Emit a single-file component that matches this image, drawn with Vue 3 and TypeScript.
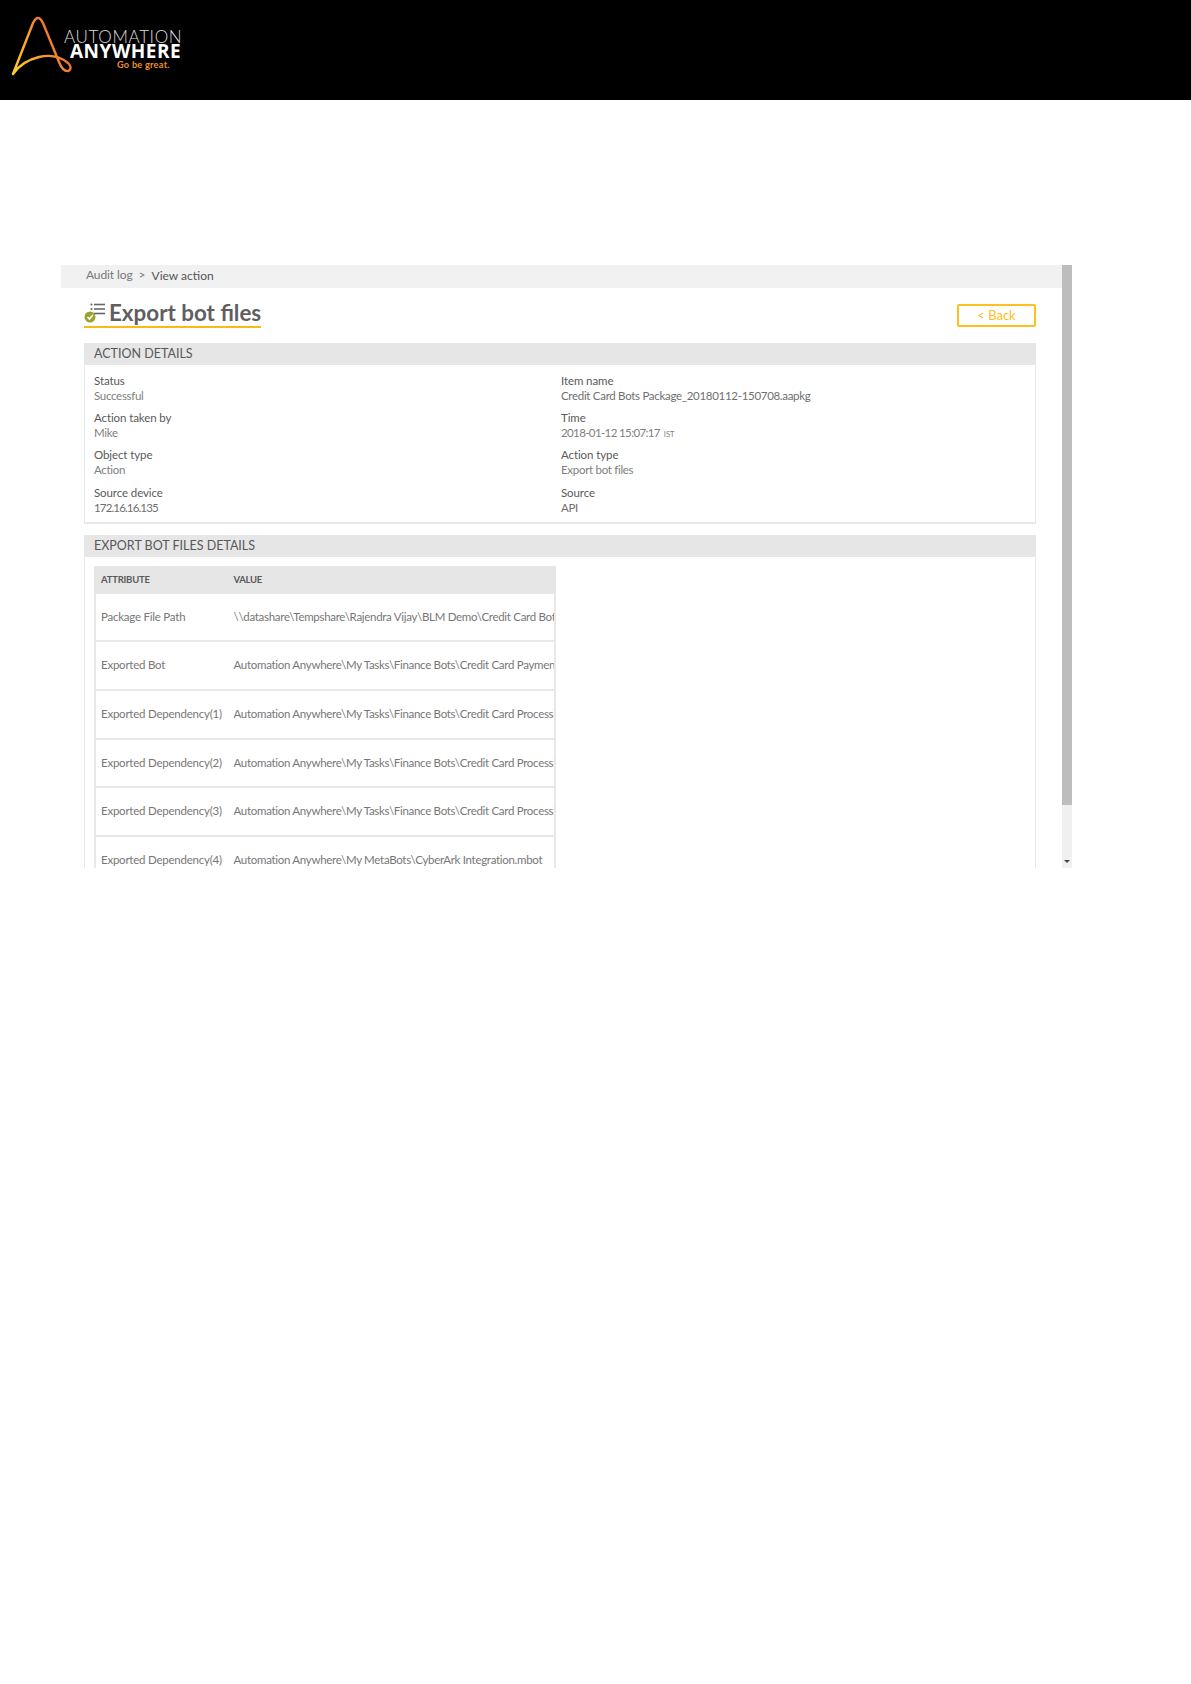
<script setup lang="ts">
interface Field { label: string; value: string; zone?: string; kind?: string }
const fields: Field[] = [
  { label: 'Status', value: 'Successful' },
  { label: 'Item name', value: 'Credit Card Bots Package_20180112-150708.aapkg', kind: 'dark' },
  { label: 'Action taken by', value: 'Mike' },
  { label: 'Time', value: '2018-01-12 15:07:17', zone: 'IST', kind: 'time' },
  { label: 'Object type', value: 'Action' },
  { label: 'Action type', value: 'Export bot files' },
  { label: 'Source device', value: '172.16.16.135', kind: 'dark ip' },
  { label: 'Source', value: 'API', kind: 'dark' },
]
const rows: [string, string][] = [
  ['Package File Path', '\\\\datashare\\Tempshare\\Rajendra Vijay\\BLM Demo\\Credit Card Bots Package_20180112-150708.aapkg'],
  ['Exported Bot', 'Automation Anywhere\\My Tasks\\Finance Bots\\Credit Card Payment.atmx'],
  ['Exported Dependency(1)', 'Automation Anywhere\\My Tasks\\Finance Bots\\Credit Card Processing.atmx'],
  ['Exported Dependency(2)', 'Automation Anywhere\\My Tasks\\Finance Bots\\Credit Card Processing.atmx'],
  ['Exported Dependency(3)', 'Automation Anywhere\\My Tasks\\Finance Bots\\Credit Card Processing.atmx'],
  ['Exported Dependency(4)', 'Automation Anywhere\\My MetaBots\\CyberArk Integration.mbot'],
]
</script>

<template>
  <div class="page">
    <header class="top">
      <div class="logo">
        <svg class="mark" width="80" height="90" viewBox="0 0 80 90" fill="none">
          <defs>
            <linearGradient id="aa" x1="12" y1="74" x2="70" y2="40" gradientUnits="userSpaceOnUse">
              <stop offset="0" stop-color="#ffd22e" />
              <stop offset="0.5" stop-color="#f9a02c" />
              <stop offset="1" stop-color="#ec5a2c" />
            </linearGradient>
          </defs>
          <path d="M13 74 L33 23 Q38 13 43 23 L59 62 Q63 72 68.500 71 Q73 68 68 63 Q56 53 39 57 Q22 61 13 74" stroke="url(#aa)" stroke-width="2.400" stroke-linejoin="round" stroke-linecap="round" />
        </svg>
        <div class="brand">
          <div class="b1">AUTOMATION</div>
          <div class="b2">ANYWHERE</div>
          <div class="b3">Go be great.</div>
        </div>
      </div>
    </header>

    <section class="frame">
      <div class="viewport">
        <nav class="crumbs"><span class="c1">Audit log</span><span class="sep">&gt;</span><span class="c2">View action</span></nav>
        <div class="content">
          <div class="titlebar">
            <h1 class="title">
              <svg width="22" height="24" viewBox="0 0 22 24">
                <circle cx="7.500" cy="3.500" r="1.100" fill="#666" />
                <circle cx="7.500" cy="8" r="1.100" fill="#666" />
                <rect x="10" y="2.700" width="11" height="1.600" fill="#666" />
                <rect x="10" y="7.200" width="11" height="1.600" fill="#666" />
                <rect x="10" y="11.700" width="11" height="1.600" fill="#666" />
                <circle cx="6" cy="16" r="5.500" fill="#9aa32f" />
                <path d="M3.500 16 L5.500 18 L8.800 14" stroke="#fff" stroke-width="1.600" fill="none" />
              </svg>
              <span>Export bot files</span>
            </h1>
            <button class="back">&lt; Back</button>
          </div>

          <div class="panel">
            <div class="panel-head">ACTION DETAILS</div>
            <div class="fields">
              <div v-for="f in fields" :key="f.label" class="field">
                <div class="label">{{ f.label }}</div>
                <div class="value" :class="f.kind">{{ f.value }}<small v-if="f.zone" class="zone">{{ f.zone }}</small></div>
              </div>
            </div>
          </div>

          <div class="panel second">
            <div class="panel-head">EXPORT BOT FILES DETAILS</div>
            <div class="table-wrap">
              <div class="thead"><span class="c-a">ATTRIBUTE</span><span class="c-v">VALUE</span></div>
              <div v-for="r in rows" :key="r[0]" class="row">
                <span class="c-a">{{ r[0] }}</span><span class="c-v">{{ r[1] }}</span>
              </div>
            </div>
          </div>
        </div>
      </div>
      <div class="scrollbar">
        <div class="thumb"></div>
        <div class="rest"><i class="arrow"></i></div>
      </div>
    </section>
  </div>
</template>

<style>
html, body { margin: 0; background: #fff; }
</style>

<style scoped>
.page { width: 1191px; height: 1684px; background: #fff; font-family: Lato, "Open Sans", sans-serif; color: #666; overflow: hidden; }
.top { height: 100px; background: #000; }
.logo { display: flex; height: 90px; }
.mark { flex: none; }
.brand { margin-left: -16px; padding-top: 29px; width: 120px; }
.b1 { color: #dcdcdc; font: 300 17px/15px Lato, sans-serif; letter-spacing: 0.650px; white-space: nowrap; }
.b2 { color: #fff; font: 700 19px/15px "Open Sans", sans-serif; letter-spacing: 0.500px; padding-left: 6px; white-space: nowrap; }
.b3 { color: #f28e2b; font: 700 9.200px/12px Lato, sans-serif; padding-left: 53px; white-space: nowrap; letter-spacing: 0.250px; }

.frame { display: flex; width: 1011px; height: 603px; margin: 165px 0 0 61px; overflow: hidden; }
.viewport { width: 1001px; height: 603px; overflow: hidden; flex: none; }
.crumbs { height: 23px; background: #f1f1f1; padding-left: 25px; font-size: 12px; line-height: 22px; display: flex; }
.c1 { color: #777; line-height: 20px; letter-spacing: -0.100px; }
.sep { margin: 0 6px 0 6px; color: #777; line-height: 20px; }
.c2 { color: #555; }
.content { padding: 0 26px 0 23px; }
.titlebar { display: flex; justify-content: space-between; align-items: flex-start; height: 55px; }
.title { margin: 12px 0 0; display: flex; align-items: center; gap: 3px; font: 700 22.400px/26px Lato, sans-serif; color: #5f5f61; border-bottom: 2px solid #fdb913; }
.back { margin-top: 16px; width: 79px; height: 23px; padding: 0; border: 2px solid #fdc020; border-radius: 2px; background: #fff; color: #fdc020; font: 400 13px/19px Lato, sans-serif; }
.panel { border: solid #e8e8e8; border-width: 0 1px 2px 1px; }
.second { margin-top: 11px; border-bottom: 0; }
.panel-head { height: 22px; margin: 0 -1px; padding-left: 10px; background: #e6e6e6; color: #58585a; font-size: 12.500px; line-height: 21px; }
.fields { display: grid; grid-template-columns: 467px 1fr; padding: 8px 0 0 9px; height: 149px; box-sizing: content-box; grid-auto-rows: 37.200px; }
.label { font-size: 11.500px; letter-spacing: -0.100px; line-height: 15px; color: #5a5a5a; }
.value { font-size: 11.500px; letter-spacing: -0.300px; line-height: 15px; color: #808080; }
.value.dark { color: #6f6f6f; }
.value.time { letter-spacing: -0.620px; }
.value.ip { letter-spacing: -0.850px; }
.zone { font-size: 7.500px; margin-left: 4px; letter-spacing: 0; }
.table-wrap { margin: 9px 0 0 9px; width: 462px; border: solid #e8e8e8; border-width: 0 2px; box-sizing: border-box; }
.thead { height: 27.700px; margin: 0 -2px; padding: 0 2px 1px; box-sizing: border-box; background: #e6e6e6; display: flex; align-items: center; font-size: 9.500px; font-weight: 700; letter-spacing: 0.250px; color: #5a5a5a; }
.row { height: 44.700px; padding-bottom: 2px; border-bottom: 2px solid #e8e8e8; box-sizing: content-box; display: flex; align-items: center; font-size: 11.500px; letter-spacing: -0.200px; color: #777; white-space: nowrap; overflow: hidden; }
.c-a { width: 137.500px; padding-left: 5px; box-sizing: border-box; flex: none; letter-spacing: -0.230px; }
.c-v { flex: none; letter-spacing: -0.300px; }
.scrollbar { width: 10px; flex: none; background: #f0f0f0; display: flex; flex-direction: column; }
.thumb { height: 540px; background: #bdbdbd; }
.rest { flex: 1; display: flex; align-items: flex-end; justify-content: center; padding-bottom: 5px; }
.arrow { width: 0; height: 0; border: solid transparent; border-width: 3px 3.500px 0; border-top-color: #444; }
</style>
